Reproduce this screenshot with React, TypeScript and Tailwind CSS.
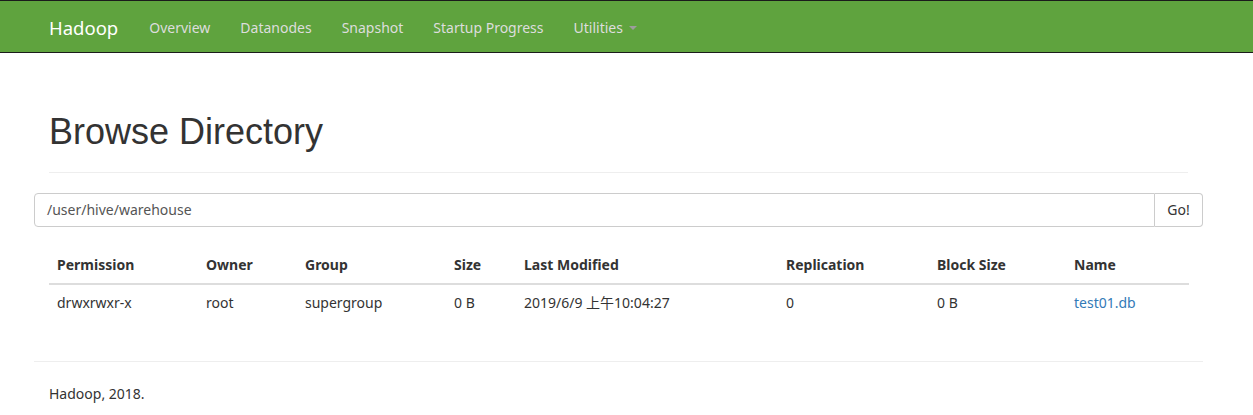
import React from "react";

const cols = [
  { h: "Permission", w: "w-[149px]" },
  { h: "Owner", w: "w-[99px]" },
  { h: "Group", w: "w-[149px]" },
  { h: "Size", w: "w-[70px]" },
  { h: "Last Modified", w: "w-[262px]" },
  { h: "Replication", w: "w-[151px]" },
  { h: "Block Size", w: "w-[137px]" },
  { h: "Name", w: "w-[123px]" },
];

const row = ["drwxrwxr-x", "root", "supergroup", "0 B", "2019/6/9 上午10:04:27", "0", "0 B"];

export default function App() {
  const body = { fontFamily: '"Noto Sans", "Noto Sans CJK SC", sans-serif' };
  return (
    <div className="min-h-[415px] bg-white text-[#333] text-[14px] leading-[20px]" style={body}>
      <nav className="h-[53px] bg-[#5fa33e] border-y border-[#1b1b1b] flex items-center pt-[2px]">
        <div className="ml-[34px] px-[15px] flex items-center">
          <span className="text-[18.5px] text-[#fff] pr-[16px]">Hadoop</span>
          {["Overview", "Datanodes", "Snapshot", "Startup Progress"].map((t) => (
            <span key={t} className="px-[15px] text-[#ddd]">{t}</span>
          ))}
          <span className="px-[15px] text-[#ddd] flex items-center">
            Utilities
            <span className="ml-[6px] w-0 h-0 border-x-[4px] border-x-transparent border-t-[4px] border-t-[#9d9d9d]" />
          </span>
        </div>
      </nav>

      <div className="ml-[34px] w-[1169px]">
        <div className="mx-[15px] mt-[59px] pb-[20px] border-b border-[#eee]">
          <h1 className="text-[36px] leading-[40px] font-normal" style={{ fontFamily: '"Liberation Sans", Arial, sans-serif' }}>
            Browse Directory
          </h1>
        </div>

        <div className="mt-[20px] flex h-[34px]">
          <div className="flex-1 border border-[#ccc] rounded-l-[4px] px-[12px] flex items-center text-[#555]">
            /user/hive/warehouse
          </div>
          <div className="w-[48px] border border-l-0 border-[#ccc] rounded-r-[4px] flex items-center justify-center text-[#333]">
            Go!
          </div>
        </div>

        <table className="mx-[15px] mt-[20px] w-[1140px] border-collapse table-fixed">
          <thead>
            <tr className="border-b-2 border-[#ddd]">
              {cols.map((c) => (
                <th key={c.h} className={`${c.w} text-left font-bold p-[8px]`}>{c.h}</th>
              ))}
            </tr>
          </thead>
          <tbody>
            <tr>
              {row.map((v, i) => (
                <td key={i} className="p-[8px]">{v}</td>
              ))}
              <td className="p-[8px] text-[#337ab7]">test01.db</td>
            </tr>
          </tbody>
        </table>

        <div className="mt-[40px] border-t border-[#eee]" />
        <p className="mt-[22px] mx-[15px]">Hadoop, 2018.</p>
      </div>
    </div>
  );
}
